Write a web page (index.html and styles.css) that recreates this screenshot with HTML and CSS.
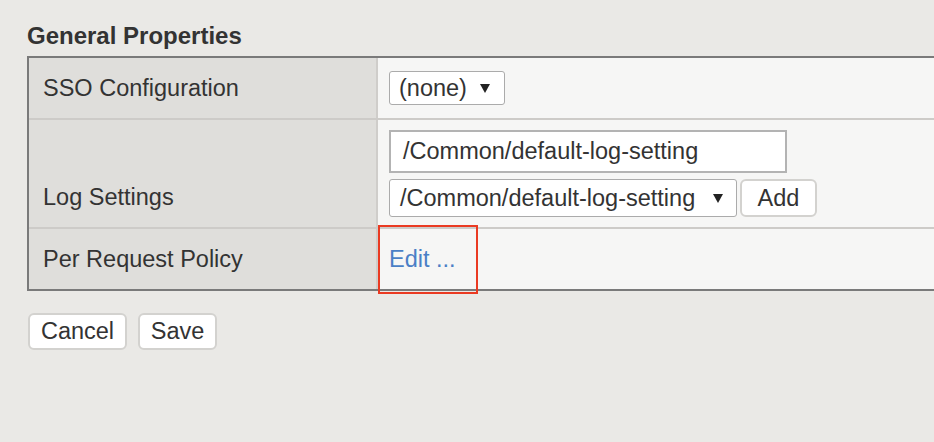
FILE: index.html
```html
<!DOCTYPE html>
<html>
<head>
<meta charset="utf-8">
<link rel="stylesheet" href="styles.css">
</head>
<body>
<div class="page">
  <h2 class="title">General Properties</h2>
  <div class="props">
    <div class="row row-short">
      <div class="label">SSO Configuration</div>
      <div class="value value-center">
        <div class="select select-none"><span>(none)</span><svg class="arrow" width="10" height="9" viewBox="0 0 10 9"><polygon points="0,0 10,0 5,9" fill="#222"/></svg></div>
      </div>
    </div>
    <div class="row row-tall">
      <div class="label">Log Settings</div>
      <div class="value value-stack">
        <div class="input">/Common/default-log-setting</div>
        <div class="line">
          <div class="select select-log"><span>/Common/default-log-setting</span><svg class="arrow" width="10" height="9" viewBox="0 0 10 9"><polygon points="0,0 10,0 5,9" fill="#222"/></svg></div>
          <button class="btn btn-add">Add</button>
        </div>
      </div>
    </div>
    <div class="row row-short">
      <div class="label">Per Request Policy</div>
      <div class="value value-end">
        <a class="link">Edit ...</a>
        <div class="highlight"></div>
      </div>
    </div>
  </div>
  <div class="actions">
    <button class="btn btn-cancel">Cancel</button>
    <button class="btn btn-save">Save</button>
  </div>
</div>
</body>
</html>
```

FILE: styles.css
```css
html, body {
  margin: 0;
  padding: 0;
  background: #eae9e6;
  overflow: hidden;
}
body {
  width: 934px;
  height: 442px;
  font-family: "Liberation Sans", Arial, sans-serif;
  font-size: 23.5px;
  color: #333;
}
.page {
  padding: 22px 0 0 27px;
}
.title {
  margin: 0 0 6px 0;
  font-size: 24px;
  line-height: 28px;
  font-weight: bold;
  color: #333;
}
.props {
  width: 907px;
  box-sizing: border-box;
  border: 2px solid #7a7a7a;
  border-right: none;
  background: #f6f6f5;
}
.row {
  display: grid;
  grid-template-columns: 349px 1fr;
  border-bottom: 2px solid #cdcbc8;
}
.row:last-child {
  border-bottom: none;
}
.row-short {
  height: 60px;
}
.row-tall {
  height: 107px;
}
.label {
  background: #dfdedb;
  border-right: 2px solid #cfcdca;
  padding: 0 0 16px 14px;
  line-height: 28px;
  display: flex;
  align-items: flex-end;
}
.value {
  padding-left: 11px;
  display: flex;
  position: relative;
}
.value-center {
  align-items: center;
}
.value-end {
  align-items: flex-end;
  padding-bottom: 16px;
  line-height: 28px;
}
.value-stack {
  flex-direction: column;
  padding-top: 10px;
  gap: 6px;
}
.line {
  display: flex;
  gap: 3px;
}
.select {
  box-sizing: border-box;
  display: flex;
  align-items: center;
  background: #fff;
  border: 1px solid #ababab;
  border-radius: 3px;
  line-height: 28px;
}
.select-none {
  width: 116px;
  height: 34px;
  padding-left: 9px;
}
.select-none .arrow {
  margin-left: 13px;
}
.select-log {
  width: 348px;
  height: 38px;
  padding-left: 10px;
}
.select-log .arrow {
  margin-left: 18px;
}
.input {
  box-sizing: border-box;
  width: 398px;
  height: 43px;
  background: #fff;
  border: 2px solid #b3b3b3;
  padding-left: 12px;
  line-height: 39px;
}
.btn {
  box-sizing: border-box;
  font-family: "Liberation Sans", Arial, sans-serif;
  font-size: 23.5px;
  color: #333;
  background: #fff;
  border: 2px solid #d3d2cf;
  border-radius: 6px;
  padding: 0;
  margin: 0;
}
.btn-add {
  width: 77px;
  height: 38px;
}
.link {
  color: #4a7fc6;
}
.highlight {
  position: absolute;
  left: 0;
  top: -4px;
  width: 100px;
  height: 69px;
  box-sizing: border-box;
  border: 2px solid #ea3a22;
}
.actions {
  display: flex;
  gap: 11px;
  margin-top: 22px;
  padding-left: 1px;
}
.btn-cancel {
  width: 99px;
  height: 37px;
}
.btn-save {
  width: 79px;
  height: 37px;
}
```
